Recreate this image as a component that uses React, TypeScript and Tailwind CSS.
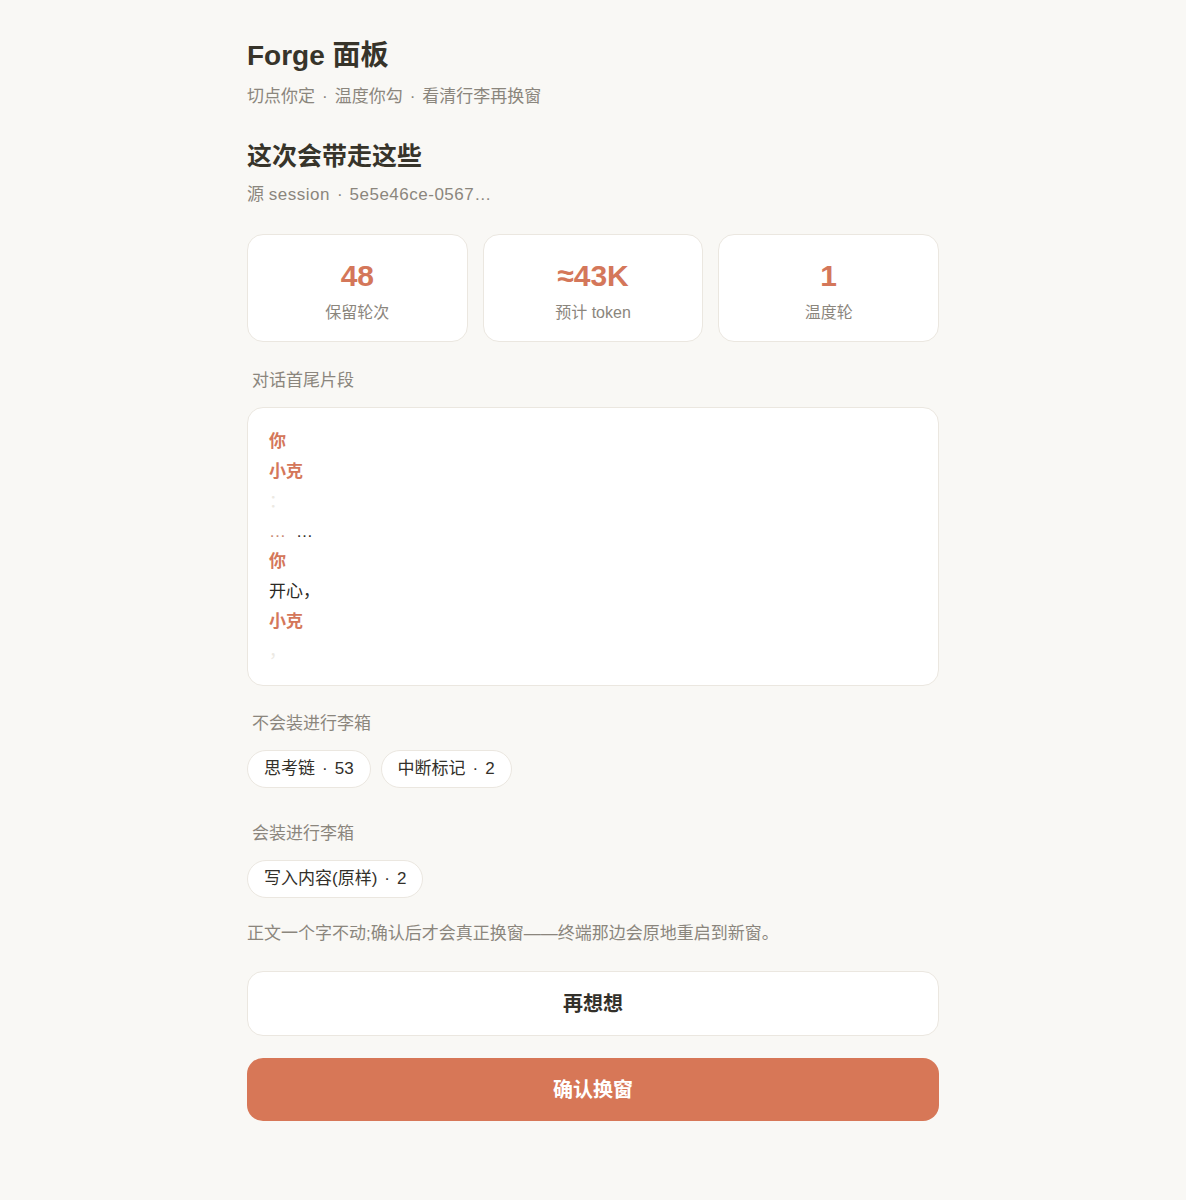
import React from "react";

const font = { fontFamily: '"Liberation Sans", "Noto Sans CJK SC", sans-serif' };

// the middle dot sits with a wider gap than plain spaces give
function Sep() {
  return <span className="mx-[7px]">·</span>;
}

function Stat({ value, label }: { value: string; label: string }) {
  return (
    <div className="flex flex-col items-center h-[108px] pt-[22px] rounded-2xl bg-white border border-[#ebe7e0]">
      <div className="text-[30px] leading-[38px] font-semibold text-[#d4775a]">{value}</div>
      <div className="mt-[6px] text-[16px] leading-[24px] text-[#8b867d]">{label}</div>
    </div>
  );
}

function Chip({ children }: { children: React.ReactNode }) {
  return (
    <span className="inline-flex items-center h-[38px] px-4 rounded-full bg-white border border-[#ebe7e0] text-[17px] text-[#33302a]">
      {children}
    </span>
  );
}

export default function App() {
  return (
    <div className="min-h-screen bg-[#f9f8f5] flex justify-center" style={font}>
      <div className="w-[692px] pt-[38px] pb-20">
        {/* Header */}
        <h1 className="text-[28px] leading-[36px] font-bold text-[#37342a]">Forge 面板</h1>
        <p className="mt-[11px] text-[17px] leading-[24px] text-[#8b867d]">
          切点你定<Sep />温度你勾<Sep />看清行李再换窗
        </p>

        <h2 className="mt-[31px] text-[25px] leading-[32px] font-bold text-[#37342a]">这次会带走这些</h2>
        <p className="mt-[11px] text-[17px] leading-[24px] text-[#8b867d]">
          源 <span className="tracking-[0.5px]">session</span>
          <Sep />
          <span className="tracking-[0.5px]">5e5e46ce-0567…</span>
        </p>

        {/* Stats */}
        <div className="mt-[27px] grid grid-cols-3 gap-[15px]">
          <Stat value="48" label="保留轮次" />
          <Stat value="≈43K" label="预计 token" />
          <Stat value="1" label="温度轮" />
        </div>

        {/* Snippet */}
        <div className="mt-[27px] pl-[5px] text-[17px] leading-[24px] text-[#8b867d]">对话首尾片段</div>
        <div className="mt-[14px] h-[279px] rounded-2xl bg-white border border-[#ebe7e0] px-[21px] py-[19px] text-[17px] leading-[30px]">
          <div className="font-semibold text-[#d4775a]">你</div>
          <div className="font-semibold text-[#d4775a]">小克</div>
          <div className="text-[#ece9e3]">：</div>
          <div>
            <span className="text-[#c98a74]">…</span>
            <span className="ml-[10px] text-[#33302a]">…</span>
          </div>
          <div className="font-semibold text-[#d4775a]">你</div>
          <div className="text-[#2b2925]">开心，</div>
          <div className="font-semibold text-[#d4775a]">小克</div>
          <div className="text-[#ece9e3]">，</div>
        </div>

        {/* Not packed */}
        <div className="mt-[26px] pl-[5px] text-[17px] leading-[24px] text-[#8b867d]">不会装进行李箱</div>
        <div className="mt-[14px] flex gap-[10px]">
          <Chip>思考链<Sep />53</Chip>
          <Chip>中断标记<Sep />2</Chip>
        </div>

        {/* Packed */}
        <div className="mt-[34px] pl-[5px] text-[17px] leading-[24px] text-[#8b867d]">会装进行李箱</div>
        <div className="mt-[14px] flex gap-[10px]">
          <Chip>写入内容(原样)<Sep />2</Chip>
        </div>

        <p className="mt-[24px] text-[17px] leading-[24px] text-[#8b867d]">
          正文一个字不动;确认后才会真正换窗——终端那边会原地重启到新窗。
        </p>

        {/* Actions */}
        <button className="mt-[25px] w-full h-[65px] rounded-2xl bg-white border border-[#ebe7e0] text-[20px] font-bold text-[#33302a]">
          再想想
        </button>
        <button className="mt-[22px] w-full h-[63px] rounded-2xl bg-[#d77757] text-[20px] font-bold text-white">
          确认换窗
        </button>
      </div>
    </div>
  );
}
